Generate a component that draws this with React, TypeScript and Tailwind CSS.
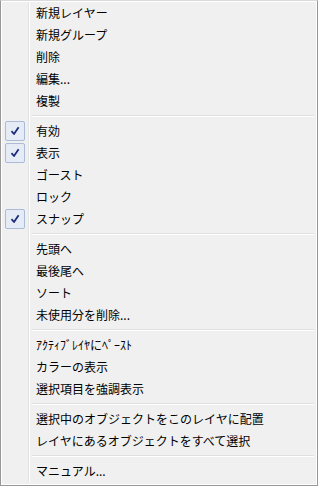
import React from 'react';

type Item = { label: string; checked?: boolean };

const GROUPS: Item[][] = [
  [{ label: '新規レイヤー' }, { label: '新規グループ' }, { label: '削除' }, { label: '編集...' }, { label: '複製' }],
  [
    { label: '有効', checked: true },
    { label: '表示', checked: true },
    { label: 'ゴースト' },
    { label: 'ロック' },
    { label: 'スナップ', checked: true },
  ],
  [{ label: '先頭へ' }, { label: '最後尾へ' }, { label: 'ソート' }, { label: '未使用分を削除...' }],
  [{ label: 'ｱｸﾃｨﾌﾞﾚｲﾔにﾍﾟｰｽﾄ' }, { label: 'カラーの表示' }, { label: '選択項目を強調表示' }],
  [{ label: '選択中のオブジェクトをこのレイヤに配置' }, { label: 'レイヤにあるオブジェクトをすべて選択' }],
  [{ label: 'マニュアル...' }],
];

const CheckBox = () => (
  <div className="flex h-[20px] w-[20px] items-center justify-center rounded-[2px] border border-[#a9bbd6] bg-[#e6ecf6]">
    <svg width="10" height="10" viewBox="0 0 10 10">
      <path d="M1.5 5.2 L4 8 L8.6 1.2" fill="none" stroke="#1d2b78" strokeWidth="1.8" strokeLinejoin="round" />
    </svg>
  </div>
);

const Row = ({ item }: { item: Item }) => (
  <div className="flex h-[22px]">
    <div className="flex w-[27px] shrink-0 items-center border-r border-[#e2e3e3] pl-[3px]">
      {item.checked && <CheckBox />}
    </div>
    <div className="flex flex-1 items-center border-l border-white pl-[6px] text-[12px] leading-none text-black">
      {item.label}
    </div>
  </div>
);

const Separator = () => (
  <div className="flex h-[8px]">
    <div className="w-[27px] shrink-0 border-r border-[#e2e3e3]" />
    <div className="flex-1 border-l border-white pt-[3px] pl-[2px] pr-[2px]">
      <div className="h-px bg-[#e0e0e0]" />
      <div className="h-px bg-white" />
    </div>
  </div>
);

export default function App() {
  return (
    <div
      className="h-[486px] w-[318px] border border-[#979797] border-t-[#dadada] bg-[#f0f0f0]"
      style={{ fontFamily: '"Noto Sans CJK JP", "Noto Sans", sans-serif' }}
    >
      <div className="flex h-full flex-col border border-white pb-[2px]">
        {GROUPS.map((group, gi) => (
          <React.Fragment key={gi}>
            {gi > 0 && <Separator />}
            {group.map((item) => (
              <Row key={item.label} item={item} />
            ))}
          </React.Fragment>
        ))}
      </div>
    </div>
  );
}
